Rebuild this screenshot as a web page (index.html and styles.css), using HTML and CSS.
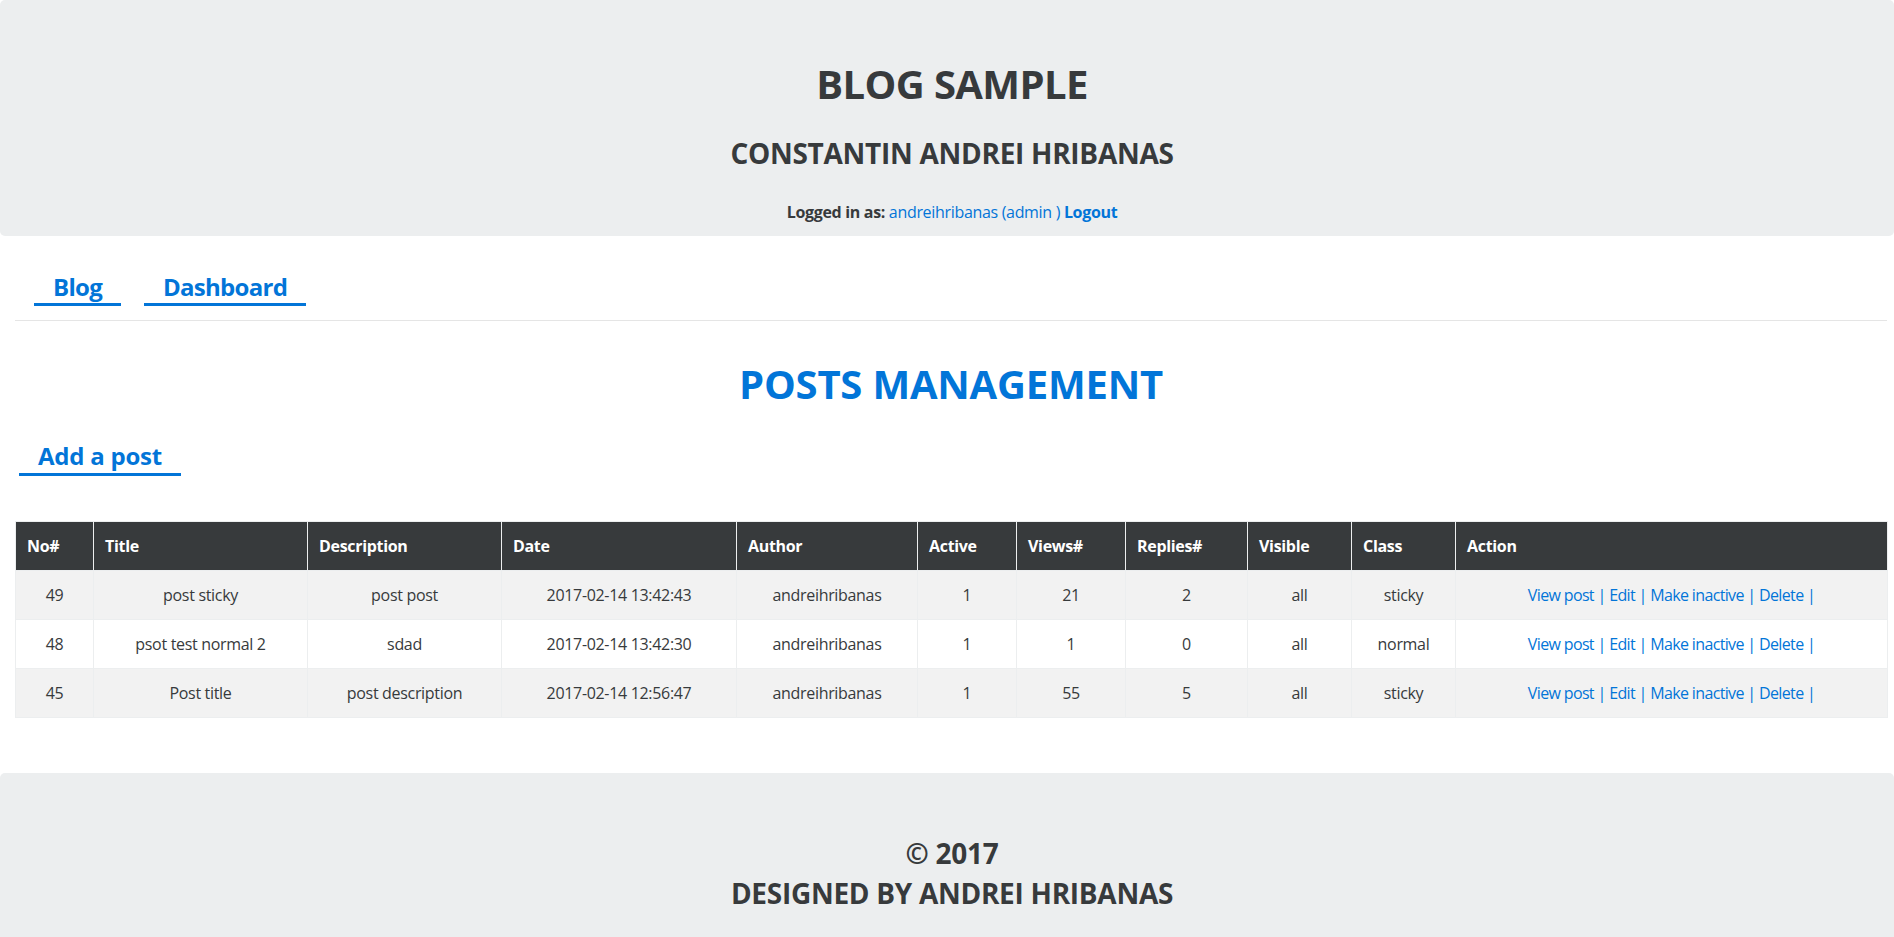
FILE: index.html
```html
<!DOCTYPE html>
<html lang="en">
<head>
<meta charset="utf-8">
<title>Blog Sample - Posts Management</title>
<link rel="stylesheet" href="styles.css">
</head>
<body>
<header class="masthead">
  <h1 class="site-title">BLOG SAMPLE</h1>
  <h3 class="site-author">CONSTANTIN ANDREI HRIBANAS</h3>
  <p class="login-line"><strong>Logged in as:</strong> <a href="#" class="link">andreihribanas (admin )</a> <a href="#" class="link link-bold">Logout</a></p>
</header>

<main class="content">
  <nav class="top-nav">
    <a href="#" class="nav-link">Blog</a>
    <a href="#" class="nav-link">Dashboard</a>
  </nav>
  <hr class="divider">

  <h1 class="page-title">POSTS MANAGEMENT</h1>

  <div class="actions">
    <a href="#" class="nav-link add-link">Add a post</a>
  </div>

  <table class="posts-table">
    <colgroup>
      <col class="c-no"><col class="c-title"><col class="c-desc"><col class="c-date"><col class="c-author"><col class="c-active"><col class="c-views"><col class="c-replies"><col class="c-visible"><col class="c-class"><col class="c-action">
    </colgroup>
    <thead>
      <tr>
        <th>No#</th><th>Title</th><th>Description</th><th>Date</th><th>Author</th><th>Active</th><th>Views#</th><th>Replies#</th><th>Visible</th><th>Class</th><th>Action</th>
      </tr>
    </thead>
    <tbody>
      <tr>
        <td>49</td><td>post sticky</td><td>post post</td><td>2017-02-14 13:42:43</td><td>andreihribanas</td><td>1</td><td>21</td><td>2</td><td>all</td><td>sticky</td>
        <td class="action-cell"><a href="#">View post</a> | <a href="#">Edit</a> | <a href="#">Make inactive</a> | <a href="#">Delete</a> |</td>
      </tr>
      <tr>
        <td>48</td><td>psot test normal 2</td><td>sdad</td><td>2017-02-14 13:42:30</td><td>andreihribanas</td><td>1</td><td>1</td><td>0</td><td>all</td><td>normal</td>
        <td class="action-cell"><a href="#">View post</a> | <a href="#">Edit</a> | <a href="#">Make inactive</a> | <a href="#">Delete</a> |</td>
      </tr>
      <tr>
        <td>45</td><td>Post title</td><td>post description</td><td>2017-02-14 12:56:47</td><td>andreihribanas</td><td>1</td><td>55</td><td>5</td><td>all</td><td>sticky</td>
        <td class="action-cell"><a href="#">View post</a> | <a href="#">Edit</a> | <a href="#">Make inactive</a> | <a href="#">Delete</a> |</td>
      </tr>
    </tbody>
  </table>
</main>

<footer class="site-footer">
  <h3 class="footer-line">© 2017</h3>
  <h3 class="footer-line">DESIGNED BY ANDREI HRIBANAS</h3>
</footer>
</body>
</html>
```

FILE: styles.css
```css
* { box-sizing: border-box; }

html, body {
  margin: 0;
  padding: 0;
  background: #fff;
}

body {
  font-family: "Open Sans", "Noto Sans", "Liberation Sans", sans-serif;
  font-size: 16px;
  line-height: 1.5;
  color: #373a3c;
  letter-spacing: -0.02em;
}

a { color: #0275d8; text-decoration: none; }

/* Header */
.masthead {
  background: #eceeef;
  border-radius: 5px;
  padding: 62px 22px 12px 32px;
  text-align: center;
}

.site-title {
  font-size: 40px;
  line-height: 44px;
  font-weight: 700;
  margin: 0;
  letter-spacing: -0.015em;
}

.site-author {
  font-size: 28px;
  line-height: 31px;
  font-weight: 700;
  margin: 32px 0 0;
  letter-spacing: -0.01em;
}

.login-line {
  font-size: 16px;
  line-height: 24px;
  margin: 31px 0 0;
}

.login-line strong { font-weight: 700; }
.link-bold { font-weight: 700; }

/* Content */
.content {
  padding: 0 7px 0 15px;
}

.top-nav {
  display: flex;
  gap: 23px;
  margin: 36px 0 0 19px;
}

.nav-link {
  display: inline-block;
  font-size: 24px;
  line-height: 29px;
  font-weight: 700;
  padding: 0 19px 2px;
  border-bottom: 3px solid #0275d8;
  letter-spacing: -0.03em;
}

.divider {
  border: 0;
  border-top: 1px solid #e5e5e5;
  margin: 14px 0 0;
  height: 0;
}

.page-title {
  font-size: 40px;
  line-height: 44px;
  font-weight: 700;
  color: #0275d8;
  text-align: center;
  margin: 41px 0 0;
  letter-spacing: -0.005em;
}

.actions {
  display: flex;
  margin: 35px 0 0 4px;
}

.add-link {
  padding: 0 19px 3px;
  letter-spacing: -0.01em;
}

/* Table */
.posts-table {
  width: 1872px;
  table-layout: fixed;
  border-collapse: collapse;
  margin: 45px 0 0;
}

.c-no { width: 78px; }
.c-title { width: 214px; }
.c-desc { width: 194px; }
.c-date { width: 235px; }
.c-author { width: 181px; }
.c-active { width: 99px; }
.c-views { width: 109px; }
.c-replies { width: 122px; }
.c-visible { width: 104px; }
.c-class { width: 104px; }
.c-action { width: 432px; }

.posts-table th,
.posts-table td {
  border: 1px solid #eceeef;
  padding: 12px;
  line-height: 24px;
  font-size: 16px;
  white-space: nowrap;
}

.posts-table th {
  background: #373a3c;
  color: #fff;
  font-weight: 700;
  text-align: left;
  border-color: #eceeef;
  padding: 12px 11px;
}

.posts-table td {
  text-align: center;
  color: #373a3c;
}

.posts-table tbody tr:nth-child(odd) td {
  background: #f2f2f2;
}

.posts-table td.action-cell {
  color: #0275d8;
  letter-spacing: -0.04em;
}

/* Footer */
.site-footer {
  background: #eceeef;
  border-radius: 5px;
  margin-top: 55px;
  padding: 65px 22px 64px 32px;
  text-align: center;
}

.footer-line {
  font-size: 28px;
  line-height: 31px;
  font-weight: 700;
  margin: 0 0 9px;
  letter-spacing: -0.01em;
}
```
